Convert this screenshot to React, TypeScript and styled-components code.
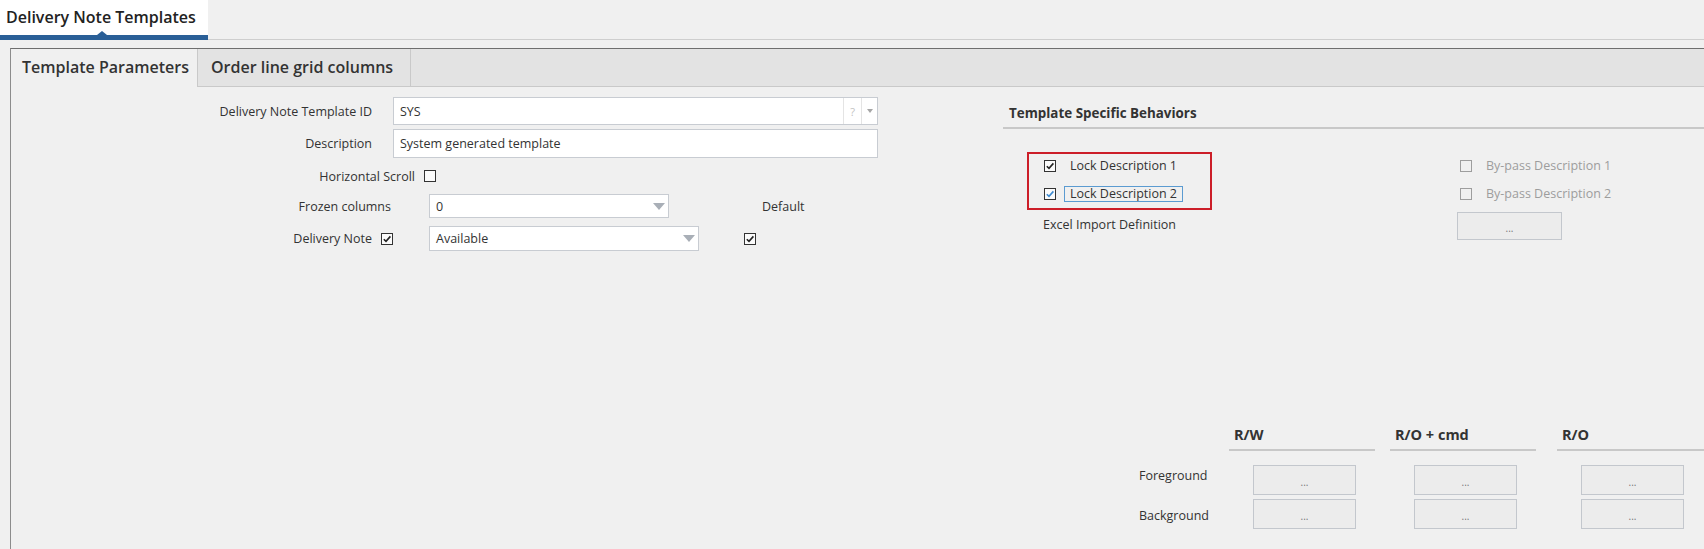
import styled, { createGlobalStyle } from "styled-components"

const GlobalStyle = createGlobalStyle`
  html, body {
    margin: 0;
    padding: 0;
    background: #f0f0f0;
  }
  body {
    font-family: "Open Sans", "Noto Sans", Arial, sans-serif;
    font-size: 12.5px;
    color: #333;
    overflow: hidden;
  }
`

const Page = styled.div`
  width: 1704px;
  height: 549px;
  overflow: hidden;
  display: flex;
  flex-direction: column;
`

const TopBar = styled.div`
  flex: none;
  height: 40px;
  display: flex;
  box-shadow: inset 0 -1px 0 #cecece;
`

const DocTab = styled.div`
  position: relative;
  width: 208px;
  height: 40px;
  box-sizing: border-box;
  padding-left: 6px;
  background: #fff;
  border-bottom: 5px solid #2a5f97;
  font-size: 16px;
  font-weight: 600;
  line-height: 35px;
  color: #222;
  white-space: nowrap;

  &::after {
    content: "";
    position: absolute;
    left: 97px;
    bottom: 0;
    border-left: 5px solid transparent;
    border-right: 5px solid transparent;
    border-bottom: 4px solid #2a5f97;
  }
`

const Panel = styled.div`
  flex: 1;
  margin: 8px 0 0 10px;
  border-top: 1px solid #6e6e6e;
  border-left: 1px solid #8c8c8c;
  display: flex;
  flex-direction: column;
`

const TabStrip = styled.div`
  flex: none;
  height: 37px;
  display: flex;
  background: #e3e3e3;
  border-bottom: 1px solid #c9c9c9;
`

const SubTab = styled.div<{ $active?: boolean; $width: number }>`
  width: ${(p) => p.$width}px;
  box-sizing: border-box;
  padding-left: ${(p) => (p.$active ? 11 : 13)}px;
  height: ${(p) => (p.$active ? 38 : 37)}px;
  background: ${(p) => (p.$active ? "#f0f0f0" : "#e3e3e3")};
  border-right: 1px solid #c9c9c9;
  font-size: 16px;
  font-weight: 600;
  line-height: 37px;
  color: #333;
  white-space: nowrap;
`

const Body = styled.div`
  flex: 1;
  display: flex;
`

const LeftForm = styled.div`
  flex: none;
  width: 992px;
  box-sizing: border-box;
  padding: 10px 0 0 169px;
  display: flex;
  flex-direction: column;
`

const FormRow = styled.div<{ $top: number; $height: number }>`
  display: flex;
  align-items: center;
  margin-top: ${(p) => p.$top}px;
  height: ${(p) => p.$height}px;
`

const FieldLabel = styled.div<{ $width: number }>`
  flex: none;
  width: ${(p) => p.$width}px;
  text-align: right;
  white-space: nowrap;
`

const TextBox = styled.div<{ $width: number; $gap: number }>`
  flex: none;
  width: ${(p) => p.$width}px;
  height: 100%;
  margin-left: ${(p) => p.$gap}px;
  box-sizing: border-box;
  border: 1px solid #c8ccd2;
  background: #fff;
  display: flex;
  align-items: center;
  padding-left: 6px;
  color: #333;
`

const LookupCell = styled.div<{ $width: number }>`
  width: ${(p) => p.$width}px;
  height: 100%;
  border-left: 1px solid #e4e4e4;
  display: flex;
  align-items: center;
  justify-content: center;
  color: #c2c2c2;
  font-size: 11px;
`

const Adornments = styled.div`
  margin-left: auto;
  height: 100%;
  display: flex;
`

const SmallCaret = styled.span`
  border-left: 3.5px solid transparent;
  border-right: 3.5px solid transparent;
  border-top: 4px solid #a6a6a6;
`

const SelectArrow = styled.span`
  margin-left: auto;
  margin-right: 3px;
  border-left: 6.5px solid transparent;
  border-right: 6.5px solid transparent;
  border-top: 7px solid #a9afb7;
`

const Box = styled.span<{ $gap?: number; $disabled?: boolean }>`
  flex: none;
  width: 12px;
  height: 12px;
  margin-left: ${(p) => p.$gap ?? 0}px;
  box-sizing: border-box;
  border: 1px solid ${(p) => (p.$disabled ? "#9d9d9d" : "#333")};
  background: ${(p) => (p.$disabled ? "transparent" : "#fbfbfb")};
  display: flex;
  align-items: center;
  justify-content: center;
`

const PlainText = styled.span<{ $gap: number }>`
  margin-left: ${(p) => p.$gap}px;
  white-space: nowrap;
`

const RightPane = styled.div`
  flex: 1;
  display: flex;
  flex-direction: column;
`

const SectionTitle = styled.div`
  margin-top: 17px;
  padding: 0 0 5px 6px;
  border-bottom: 2px solid #c8c8c8;
  font-size: 13.4px;
  font-weight: 700;
  line-height: 18px;
  color: #333;
`

const Options = styled.div`
  display: flex;
  margin-top: 23px;
  padding-left: 24px;
`

const LockColumn = styled.div`
  display: flex;
  flex-direction: column;
`

const Highlight = styled.div`
  width: 185px;
  box-sizing: border-box;
  border: 2px solid #cc1e28;
  padding: 0 0 2px 15px;
  display: flex;
  flex-direction: column;
  gap: 4px;
`

const CheckRow = styled.div<{ $indent?: number }>`
  height: 24px;
  display: flex;
  align-items: center;
  padding-left: ${(p) => p.$indent ?? 0}px;
`

const CheckLabel = styled.span<{ $focused?: boolean; $disabled?: boolean }>`
  margin-left: 8px;
  padding: 0 5px;
  border: 1px solid ${(p) => (p.$focused ? "#5b9bd1" : "transparent")};
  line-height: 14px;
  color: ${(p) => (p.$disabled ? "#9d9d9d" : "#333")};
  white-space: nowrap;
`

const ExcelLabel = styled.div`
  margin-top: 5px;
  padding-left: 16px;
  line-height: 20px;
`

const BypassColumn = styled.div`
  margin-left: 245px;
  padding-top: 2px;
  display: flex;
  flex-direction: column;
  gap: 4px;
`

const EllipsisButton = styled.div<{ $width: number; $height: number; $gap?: number }>`
  width: ${(p) => p.$width}px;
  height: ${(p) => p.$height}px;
  margin-left: ${(p) => p.$gap ?? 0}px;
  margin-top: ${(p) => (p.$gap ? 0 : 2)}px;
  box-sizing: border-box;
  border: 1px solid #c3c7cd;
  background: #ececec;
  color: #777;
  font-size: 10px;
  display: flex;
  align-items: center;
  justify-content: center;
  padding-top: 3px;
`

const ColorGrid = styled.div`
  margin: 186px 0 0 136px;
  display: grid;
  grid-template-columns: 90px 161px 167px 1fr;
  row-gap: 4px;
`

const ColumnHead = styled.div<{ $width?: number }>`
  width: ${(p) => (p.$width ? `${p.$width}px` : "auto")};
  box-sizing: border-box;
  padding: 0 0 5px 5px;
  margin-bottom: 10px;
  border-bottom: 2px solid #c8c8c8;
  font-size: 14.5px;
  font-weight: 700;
  line-height: 18px;
  color: #333;
  white-space: nowrap;
`

const RowLabel = styled.div<{ $offset: number }>`
  padding-top: ${(p) => p.$offset}px;
  line-height: 18px;
`

function Check({ checked, focused, gap, disabled }: { checked?: boolean; focused?: boolean; gap?: number; disabled?: boolean }) {
  return (
    <Box $gap={gap} $disabled={disabled}>
      {checked && (
        <svg width="10" height="10" viewBox="0 0 10 10">
          <path d="M1.8 5.2 L4 7.4 L8.4 2.4" fill="none" stroke={focused ? "#3d8ad0" : "#222"} strokeWidth="1.6" />
        </svg>
      )}
    </Box>
  )
}

const colorColumns = [
  { title: "R/W", width: 146 },
  { title: "R/O + cmd", width: 146 },
  { title: "R/O" },
]

export default function App() {
  return (
    <Page>
      <GlobalStyle />
      <TopBar>
        <DocTab>Delivery Note Templates</DocTab>
      </TopBar>
      <Panel>
        <TabStrip>
          <SubTab $active $width={187}>Template Parameters</SubTab>
          <SubTab $width={213}>Order line grid columns</SubTab>
        </TabStrip>
        <Body>
          <LeftForm>
            <FormRow $top={0} $height={28}>
              <FieldLabel $width={192}>Delivery Note Template ID</FieldLabel>
              <TextBox $width={485} $gap={21}>
                SYS
                <Adornments>
                  <LookupCell $width={17}>?</LookupCell>
                  <LookupCell $width={15}>
                    <SmallCaret />
                  </LookupCell>
                </Adornments>
              </TextBox>
            </FormRow>
            <FormRow $top={4} $height={29}>
              <FieldLabel $width={192}>Description</FieldLabel>
              <TextBox $width={485} $gap={21}>System generated template</TextBox>
            </FormRow>
            <FormRow $top={6} $height={24}>
              <FieldLabel $width={235}>Horizontal Scroll</FieldLabel>
              <Check gap={9} />
            </FormRow>
            <FormRow $top={6} $height={24}>
              <FieldLabel $width={211}>Frozen columns</FieldLabel>
              <TextBox $width={240} $gap={38}>
                0
                <SelectArrow />
              </TextBox>
              <PlainText $gap={93}>Default</PlainText>
            </FormRow>
            <FormRow $top={8} $height={25}>
              <FieldLabel $width={192}>Delivery Note</FieldLabel>
              <Check gap={9} checked />
              <TextBox $width={270} $gap={36}>
                Available
                <SelectArrow />
              </TextBox>
              <Check gap={45} checked />
            </FormRow>
          </LeftForm>
          <RightPane>
            <SectionTitle>Template Specific Behaviors</SectionTitle>
            <Options>
              <LockColumn>
                <Highlight>
                  <CheckRow>
                    <Check checked />
                    <CheckLabel>Lock Description 1</CheckLabel>
                  </CheckRow>
                  <CheckRow>
                    <Check checked focused />
                    <CheckLabel $focused>Lock Description 2</CheckLabel>
                  </CheckRow>
                </Highlight>
                <ExcelLabel>Excel Import Definition</ExcelLabel>
              </LockColumn>
              <BypassColumn>
                <CheckRow $indent={3}>
                  <Check disabled />
                  <CheckLabel $disabled>By-pass Description 1</CheckLabel>
                </CheckRow>
                <CheckRow $indent={3}>
                  <Check disabled />
                  <CheckLabel $disabled>By-pass Description 2</CheckLabel>
                </CheckRow>
                <EllipsisButton $width={105} $height={28}>...</EllipsisButton>
              </BypassColumn>
            </Options>
            <ColorGrid>
              <div />
              {colorColumns.map((c) => (
                <ColumnHead key={c.title} $width={c.width}>
                  {c.title}
                </ColumnHead>
              ))}
              <RowLabel $offset={2}>Foreground</RowLabel>
              {colorColumns.map((c) => (
                <EllipsisButton key={"fg" + c.title} $width={103} $height={30} $gap={24}>
                  ...
                </EllipsisButton>
              ))}
              <RowLabel $offset={8}>Background</RowLabel>
              {colorColumns.map((c) => (
                <EllipsisButton key={"bg" + c.title} $width={103} $height={30} $gap={24}>
                  ...
                </EllipsisButton>
              ))}
            </ColorGrid>
          </RightPane>
        </Body>
      </Panel>
    </Page>
  )
}
